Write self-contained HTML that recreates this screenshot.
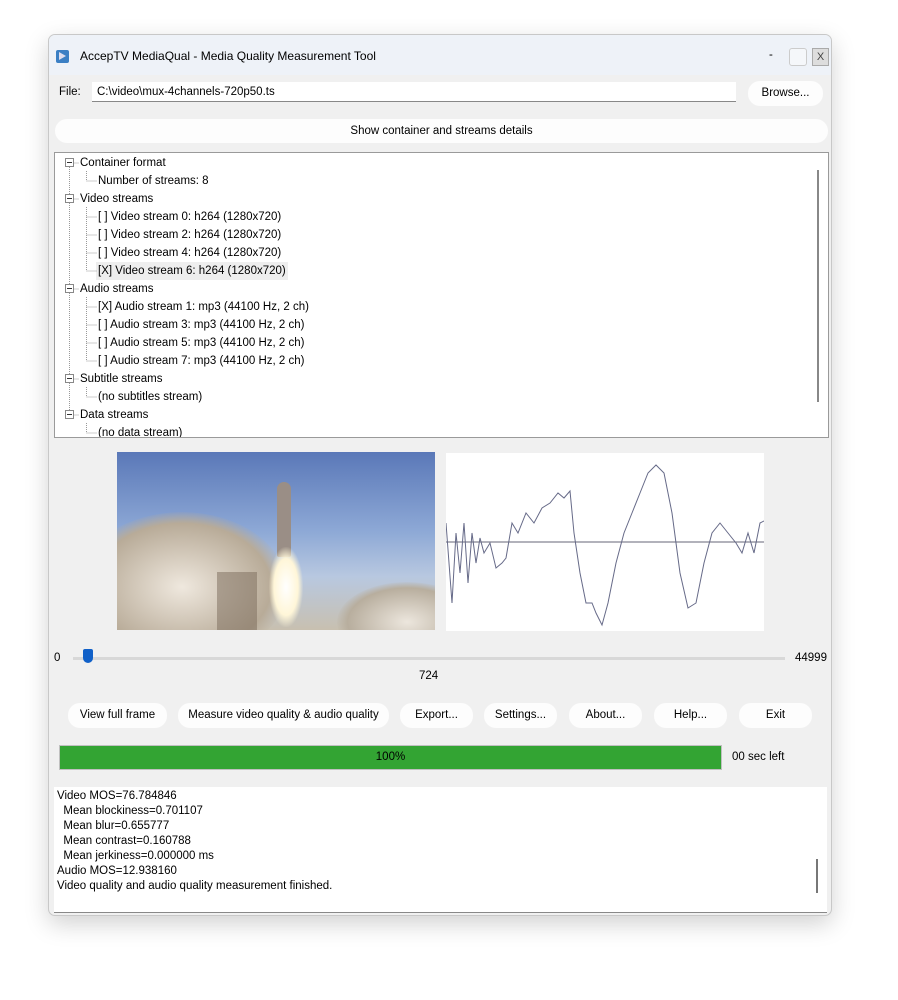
<!DOCTYPE html><html><head><style>
body{margin:0;width:898px;height:1000px;background:#fff;font-family:"Liberation Sans",sans-serif;font-size:11.5px;color:#000;position:relative;overflow:hidden}
.a{position:absolute}
.win{left:48px;top:34px;width:782px;height:880px;background:#f0f0f0;border:1px solid #c8c8c8;border-radius:7px;box-shadow:0 8px 24px rgba(0,0,0,.18);overflow:hidden}
.btn{position:absolute;background:#fdfdfd;border-radius:12px;text-align:center;line-height:25px;height:25px;font-size:11.5px}
.tree div{position:absolute;white-space:nowrap;height:18px;line-height:18px}
</style></head><body>
<div class="a win">
 <div class="a" style="left:0;top:0;width:784px;height:40px;background:#eef2f8"></div>
 <div class="a" style="left:7px;top:15px;width:13px;height:13px;background:#3b7fc4;border-radius:2px"></div>
 <div class="a" style="left:10px;top:17px;width:0;height:0;border-left:7px solid #dde;border-top:4px solid transparent;border-bottom:4px solid transparent"></div>
 <div class="a" style="left:31px;top:14px;font-size:12px">AccepTV MediaQual - Media Quality Measurement Tool</div>
 <div class="a" style="left:720px;top:14px">-</div>
 <div class="a" style="left:740px;top:13px;width:16px;height:16px;border:1px solid #ccc;border-radius:3px;background:#f5f7fa"></div>
 <div class="a" style="left:763px;top:13px;width:15px;height:16px;border:1px solid #aaa;background:#ddd;text-align:center;line-height:16px;font-size:11px;color:#444">X</div>
 <div class="a" style="left:10px;top:51px">File:</div>
 <div class="a" style="left:43px;top:47px;width:644px;height:20px;background:#fff;border-bottom:1px solid #888;line-height:20px;padding-left:5px;box-sizing:border-box">C:\video\mux-4channels-720p50.ts</div>
 <div class="btn" style="left:699px;top:46px;width:75px">Browse...</div>
 <div class="btn" style="left:6px;top:84px;width:773px;height:24px;line-height:24px">Show container and streams details</div>
 <div class="a" style="left:5px;top:117px;width:773px;height:284px;background:#fff;border:1px solid #9a9a9a;overflow:hidden">
  <div class="a" style="left:762px;top:17px;width:2px;height:232px;background:#888"></div>
  <div class="tree">
  <div style="left:25px;top:1px">Container format</div>
  <div style="left:43px;top:19px">Number of streams: 8</div>
  <div style="left:25px;top:37px">Video streams</div>
  <div style="left:43px;top:55px">[ ] Video stream 0: h264 (1280x720)</div>
  <div style="left:43px;top:73px">[ ] Video stream 2: h264 (1280x720)</div>
  <div style="left:43px;top:91px">[ ] Video stream 4: h264 (1280x720)</div>
  <div style="left:41px;top:109px;background:#eee;padding:0 2px">[X] Video stream 6: h264 (1280x720)</div>
  <div style="left:25px;top:127px">Audio streams</div>
  <div style="left:43px;top:145px">[X] Audio stream 1: mp3 (44100 Hz, 2 ch)</div>
  <div style="left:43px;top:163px">[ ] Audio stream 3: mp3 (44100 Hz, 2 ch)</div>
  <div style="left:43px;top:181px">[ ] Audio stream 5: mp3 (44100 Hz, 2 ch)</div>
  <div style="left:43px;top:199px">[ ] Audio stream 7: mp3 (44100 Hz, 2 ch)</div>
  <div style="left:25px;top:217px">Subtitle streams</div>
  <div style="left:43px;top:235px">(no subtitles stream)</div>
  <div style="left:25px;top:253px">Data streams</div>
  <div style="left:43px;top:271px">(no data stream)</div>
  </div>
  <svg class="a" style="left:0;top:0" width="60" height="284"><g stroke="#999" stroke-dasharray="1,1" fill="none">
   <path d="M14.5 10V262M14.5 10H24M14.5 46H24M14.5 136H24M14.5 226H24M14.5 262H24M31.5 18V28H42M31.5 54V118M31.5 64H42M31.5 82H42M31.5 100H42M31.5 118H42M31.5 144V208M31.5 154H42M31.5 172H42M31.5 190H42M31.5 208H42M31.5 234V244H42M31.5 270V280H42"/></g>
   <g fill="#fff" stroke="#888"><rect x="10.5" y="5.5" width="8" height="8"/><rect x="10.5" y="41.5" width="8" height="8"/><rect x="10.5" y="131.5" width="8" height="8"/><rect x="10.5" y="221.5" width="8" height="8"/><rect x="10.5" y="257.5" width="8" height="8"/></g>
   <g stroke="#333"><path d="M12 9.5h5M12 45.5h5M12 135.5h5M12 225.5h5M12 261.5h5"/></g></svg>
 </div>
 <div class="a" style="left:68px;top:417px;width:318px;height:178px;background:linear-gradient(180deg,#5a78b8 0%,#8ea9d6 45%,#b8c8e0 70%,#c8c0b0 100%);overflow:hidden">
  <div class="a" style="left:-40px;top:60px;width:210px;height:150px;border-radius:50%;background:radial-gradient(#efe8de,#b8ab98 60%,transparent 72%)"></div>
  <div class="a" style="left:220px;top:130px;width:140px;height:80px;border-radius:50%;background:radial-gradient(#ece6dd,#b8ae9e 60%,transparent 72%)"></div>
  <div class="a" style="left:160px;top:30px;width:14px;height:75px;background:#9a8e86;border-radius:7px 7px 2px 2px"></div>
  <div class="a" style="left:152px;top:95px;width:34px;height:80px;background:radial-gradient(#fff,#fff6d8 50%,transparent 72%)"></div>
  <div class="a" style="left:100px;top:120px;width:40px;height:60px;background:#7a6a5a;opacity:.5"></div>
 </div>
 <svg class="a" style="left:397px;top:418px" width="318" height="178"><rect width="318" height="178" fill="#fff"/><line x1="0" y1="89" x2="318" y2="89" stroke="#667" /><polyline fill="none" stroke="#666a88" stroke-width="1" points="0,70 6,150 10,80 14,120 18,70 22,130 26,80 30,110 34,85 38,100 44,90 50,115 56,110 60,105 66,70 72,80 80,60 88,70 96,55 104,50 112,40 118,45 124,38 128,80 134,120 140,150 146,150 150,160 156,172 162,150 170,110 178,80 186,60 194,40 202,20 210,12 218,20 226,60 234,120 242,155 250,150 258,110 266,80 274,70 282,80 290,90 296,100 302,80 308,100 314,70 318,68"/></svg>
 <div class="a" style="left:5px;top:617px">0</div>
 <div class="a" style="left:24px;top:622px;width:712px;height:3px;background:#d8d8d8"></div>
 <div class="a" style="left:34px;top:614px;width:10px;height:14px;background:#1060c8;border-radius:2px 2px 5px 5px"></div>
 <div class="a" style="left:746px;top:617px">44999</div>
 <div class="a" style="left:370px;top:635px">724</div>
 <div class="btn" style="left:19px;top:668px;width:99px">View full frame</div>
 <div class="btn" style="left:129px;top:668px;width:211px">Measure video quality &amp; audio quality</div>
 <div class="btn" style="left:351px;top:668px;width:73px">Export...</div>
 <div class="btn" style="left:435px;top:668px;width:73px">Settings...</div>
 <div class="btn" style="left:520px;top:668px;width:73px">About...</div>
 <div class="btn" style="left:605px;top:668px;width:73px">Help...</div>
 <div class="btn" style="left:690px;top:668px;width:73px">Exit</div>
 <div class="a" style="left:10px;top:710px;width:663px;height:25px;background:#33a433;border:1px solid #c0c0c0;box-sizing:border-box;text-align:center;line-height:23px">100%</div>
 <div class="a" style="left:683px;top:716px">00 sec left</div>
 <div class="a" style="left:5px;top:752px;width:773px;height:126px;background:#fff;border-bottom:1px solid #888;line-height:15px;padding:2px 0 0 3px;box-sizing:border-box;white-space:pre">Video MOS=76.784846
  Mean blockiness=0.701107
  Mean blur=0.655777
  Mean contrast=0.160788
  Mean jerkiness=0.000000 ms
Audio MOS=12.938160
Video quality and audio quality measurement finished.</div>
 <div class="a" style="left:767px;top:824px;width:2px;height:34px;background:#777"></div>
</div>
</body></html>
